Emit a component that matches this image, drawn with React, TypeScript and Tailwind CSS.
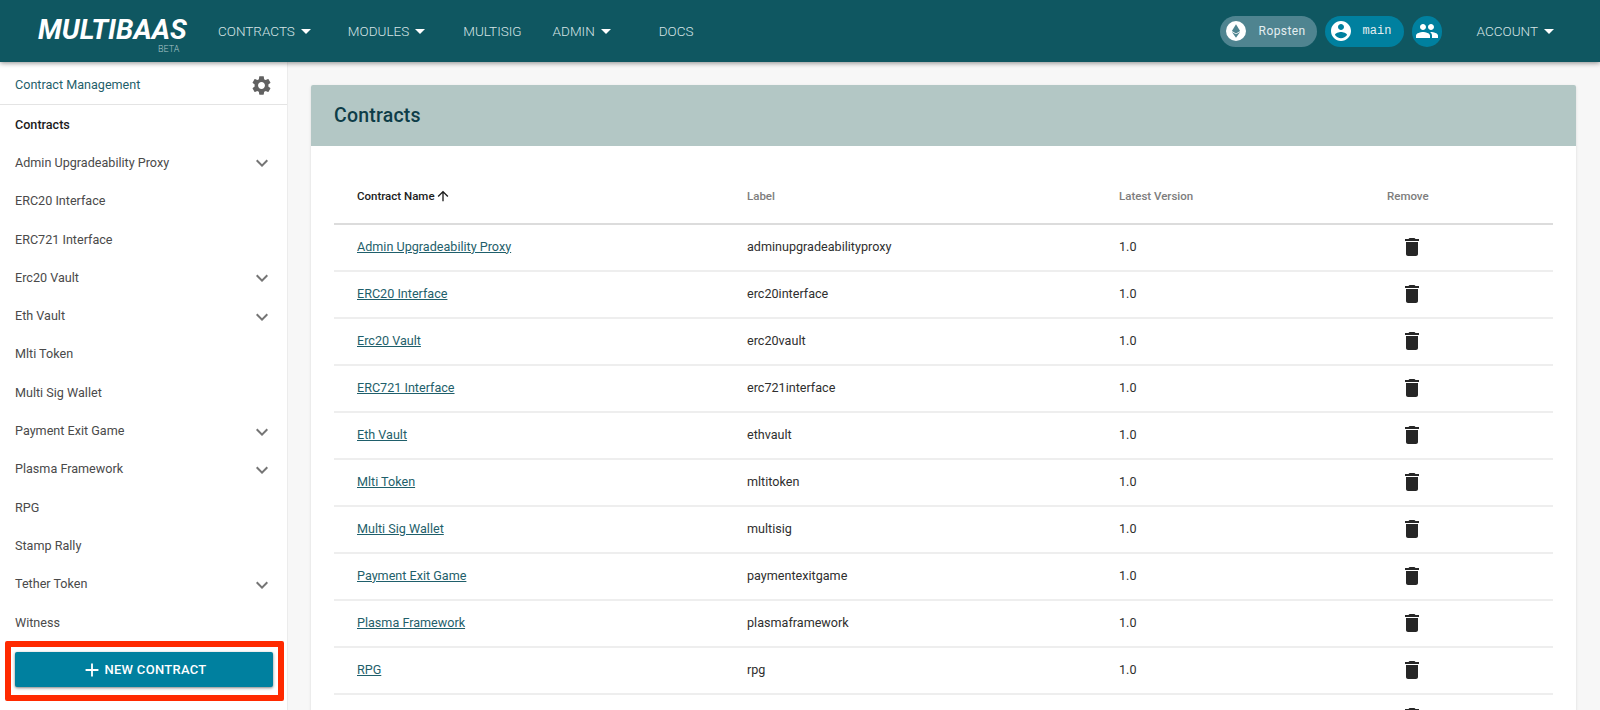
import React from "react";

const sideItems = [
  { name: "Contracts", bold: true },
  { name: "Admin Upgradeability Proxy", more: true },
  { name: "ERC20 Interface" },
  { name: "ERC721 Interface" },
  { name: "Erc20 Vault", more: true },
  { name: "Eth Vault", more: true },
  { name: "Mlti Token" },
  { name: "Multi Sig Wallet" },
  { name: "Payment Exit Game", more: true },
  { name: "Plasma Framework", more: true },
  { name: "RPG" },
  { name: "Stamp Rally" },
  { name: "Tether Token", more: true },
  { name: "Witness" },
];

const rows = [
  ["Admin Upgradeability Proxy", "adminupgradeabilityproxy"],
  ["ERC20 Interface", "erc20interface"],
  ["Erc20 Vault", "erc20vault"],
  ["ERC721 Interface", "erc721interface"],
  ["Eth Vault", "ethvault"],
  ["Mlti Token", "mltitoken"],
  ["Multi Sig Wallet", "multisig"],
  ["Payment Exit Game", "paymentexitgame"],
  ["Plasma Framework", "plasmaframework"],
  ["RPG", "rpg"],
  ["Stamp Rally", "stamprally"],
];

const Icon = ({ d, className }: { d: string; className: string }) => (
  <svg viewBox="0 0 24 24" fill="currentColor" className={className}>
    <path d={d} />
  </svg>
);

const Caret = () => <span className="ml-[6px] mt-[1px] w-0 h-0 border-x-[5px] border-x-transparent border-t-[5px] border-t-white" />;

const NavItem = ({ label, caret, className }: { label: string; caret?: boolean; className: string }) => (
  <div className={`flex items-center text-[13.5px] font-light text-[#d5e3e5] ${className}`}>
    {label}
    {caret && <Caret />}
  </div>
);

const App = () => {
  return (
    <div className="w-full h-screen flex flex-col overflow-hidden bg-[#f7f7f7] font-['Roboto',sans-serif]">
      {/* Top bar */}
      <header className="relative z-10 h-[62px] shrink-0 flex items-center bg-[#0f5761] shadow-[0_1px_5px_rgba(0,0,0,0.45)]">
        <div className="relative ml-[38px] w-[153px] text-white text-[28px] leading-none font-bold italic mb-[2px]">
          MULTIBAAS
          <span className="absolute left-[120px] top-[29px] text-[9px] leading-none font-light not-italic text-[#a9c4c7]">BETA</span>
        </div>
        <NavItem label="CONTRACTS" caret className="ml-[27px]" />
        <NavItem label="MODULES" caret className="ml-[37px]" />
        <NavItem label="MULTISIG" className="ml-[38px]" />
        <NavItem label="ADMIN" caret className="ml-[31px]" />
        <NavItem label="DOCS" className="ml-[48px]" />

        <div className="ml-auto flex items-center">
          <div className="w-[97px] h-[31px] rounded-full bg-[#4f8490] flex items-center pl-[6px] text-[#e4eef0]">
            <span className="w-[20px] h-[20px] rounded-full bg-white flex items-center justify-center">
              <svg viewBox="0 0 20 20" className="w-[20px] h-[20px]" fill="#4f8490">
                <path d="M10 3.2 5.9 10 10 12.4 14.1 10z" />
                <path d="M5.9 10.9 10 16.8 14.1 10.9 10 13.3z" />
              </svg>
            </span>
            <span className="ml-[13px] text-[12px] tracking-[0.4px]">Ropsten</span>
          </div>
          <div className="ml-[8px] w-[79px] h-[31px] rounded-full bg-[#00809f] flex items-center pl-[4px] text-white">
            <Icon className="w-[24px] h-[24px]" d="M12 2C6.48 2 2 6.48 2 12s4.48 10 10 10 10-4.48 10-10S17.52 2 12 2zm0 3c1.66 0 3 1.34 3 3s-1.34 3-3 3-3-1.34-3-3 1.34-3 3-3zm0 14.2c-2.5 0-4.71-1.28-6-3.22.03-1.99 4-3.08 6-3.08 1.99 0 5.97 1.09 6 3.08-1.29 1.94-3.5 3.22-6 3.22z" />
            <span className="ml-[10px] text-[12px] font-['Liberation_Mono',monospace] text-[#e4eef0]">main</span>
          </div>
          <div className="ml-[8px] w-[30px] h-[31px] rounded-full bg-[#00809f] flex items-center justify-center text-white">
            <Icon className="w-[24px] h-[24px]" d="M16 11c1.66 0 2.99-1.34 2.99-3S17.66 5 16 5c-1.66 0-3 1.34-3 3s1.34 3 3 3zm-8 0c1.66 0 2.99-1.34 2.99-3S9.66 5 8 5C6.34 5 5 6.34 5 8s1.34 3 3 3zm0 2c-2.33 0-7 1.17-7 3.5V19h14v-2.5c0-2.33-4.67-3.5-7-3.5zm8 0c-.29 0-.62.02-.97.05 1.16.84 1.97 1.97 1.97 3.45V19h6v-2.5c0-2.33-4.67-3.5-7-3.5z" />
          </div>
          <NavItem label="ACCOUNT" caret className="ml-[35px] mr-[46px]" />
        </div>
      </header>

      <div className="flex flex-1 min-h-0">
        {/* Sidebar */}
        <aside className="w-[288px] shrink-0 bg-white border-r border-[#ececec] flex flex-col">
          <div className="h-[43px] shrink-0 flex items-center justify-between pl-[15px] pr-[13px] pt-[5px] border-b border-[#e4e4e4]">
            <span className="text-[12.6px] text-[#1f5f6b]">Contract Management</span>
            <Icon className="w-[23px] h-[23px] text-[#616161] mr-[1px]" d="M19.14 12.94c.04-.3.06-.61.06-.94 0-.32-.02-.64-.07-.94l2.03-1.58c.18-.14.23-.41.12-.61l-1.92-3.32c-.12-.22-.37-.29-.59-.22l-2.39.96c-.5-.38-1.03-.7-1.62-.94l-.36-2.54c-.04-.24-.24-.41-.48-.41h-3.84c-.24 0-.43.17-.47.41l-.36 2.54c-.59.24-1.13.57-1.62.94l-2.39-.96c-.22-.08-.47 0-.59.22L2.74 8.87c-.12.21-.08.47.12.61l2.03 1.58c-.05.3-.09.63-.09.94s.02.64.07.94l-2.03 1.58c-.18.14-.23.41-.12.61l1.92 3.32c.12.22.37.29.59.22l2.39-.96c.5.38 1.03.7 1.62.94l.36 2.54c.05.24.24.41.48.41h3.84c.24 0 .44-.17.47-.41l.36-2.54c.59-.24 1.13-.56 1.62-.94l2.39.96c.22.08.47 0 .59-.22l1.92-3.32c.12-.22.07-.47-.12-.61l-2.01-1.58zM12 15.6c-1.98 0-3.6-1.62-3.6-3.6s1.62-3.6 3.6-3.6 3.6 1.62 3.6 3.6-1.62 3.6-3.6 3.6z" />
          </div>
          {sideItems.map((item) => (
            <div key={item.name} className="h-[38.3px] shrink-0 flex items-center justify-between pl-[15px] pr-[13px] pt-[2px]">
              <span className={item.bold ? "text-[12.6px] font-medium text-[#1c1c1c]" : "text-[12.6px] text-[#4a4a4a]"}>{item.name}</span>
              {item.more && <Icon className="w-[24px] h-[24px] text-[#757575]" d="M16.59 8.59L12 13.17 7.41 8.59 6 10l6 6 6-6z" />}
            </div>
          ))}
          {/* New contract */}
          <div className="ml-[5px] mr-[3px] shrink-0 border-[6px] border-[#ff2a00] rounded-[2px] pl-[4px] pr-[5px] pt-[5px] pb-[8px]">
            <button className="w-full h-[35px] flex items-center justify-center rounded-[2px] bg-[#00809f] text-white text-[13px] font-medium tracking-[0.3px] shadow-[0_1px_3px_rgba(0,0,0,0.5)]">
              <Icon className="w-[22px] h-[22px] mr-[1px]" d="M19 13h-6v6h-2v-6H5v-2h6V5h2v6h6v2z" />
              NEW CONTRACT
            </button>
          </div>
        </aside>

        {/* Main */}
        <main className="flex-1 min-w-0 pl-[23px] pr-[24px] pt-[23px]">
          <section className="bg-white rounded-[2px] shadow-[0_1px_3px_rgba(0,0,0,0.12)]">
            <div className="h-[61px] flex items-center pl-[23px] pt-[1px] bg-[#b3c7c5] rounded-t-[2px]">
              <h2 className="text-[19.5px] font-medium tracking-[0.2px] text-[#0d3d48]">Contracts</h2>
            </div>
            <div className="mx-[23px]">
              <div className="h-[79px] grid grid-cols-[413px_372px_268px_1fr] items-end text-[11.5px] font-medium text-[#7d7d7d] border-b-2 border-[#dcdcdc] pb-[18px]">
                <div className="pl-[23px] flex items-center text-[#1c1c1c]">
                  Contract Name
                  <Icon className="w-[16px] h-[16px]" d="M4 12l1.41 1.41L11 7.83V20h2V7.83l5.58 5.59L20 12l-8-8-8 8z" />
                </div>
                <div>Label</div>
                <div>Latest Version</div>
                <div>Remove</div>
              </div>
              {rows.map(([name, label]) => (
                <div key={name} className="h-[47px] grid grid-cols-[413px_372px_268px_1fr] items-center text-[12.6px] text-[#2f2f2f] border-b-2 border-[#eeeeee] pb-[1px]">
                  <a className="pl-[23px] text-[#1f5f6b] underline">{name}</a>
                  <div>{label}</div>
                  <div>1.0</div>
                  <div className="pl-[13px]">
                    <Icon className="w-[24px] h-[24px] text-[#262626]" d="M6 19c0 1.1.9 2 2 2h8c1.1 0 2-.9 2-2V7H6v12zM19 4h-3.5l-1-1h-5l-1 1H5v2h14V4z" />
                  </div>
                </div>
              ))}
            </div>
          </section>
        </main>
      </div>
    </div>
  );
};

export default App;
